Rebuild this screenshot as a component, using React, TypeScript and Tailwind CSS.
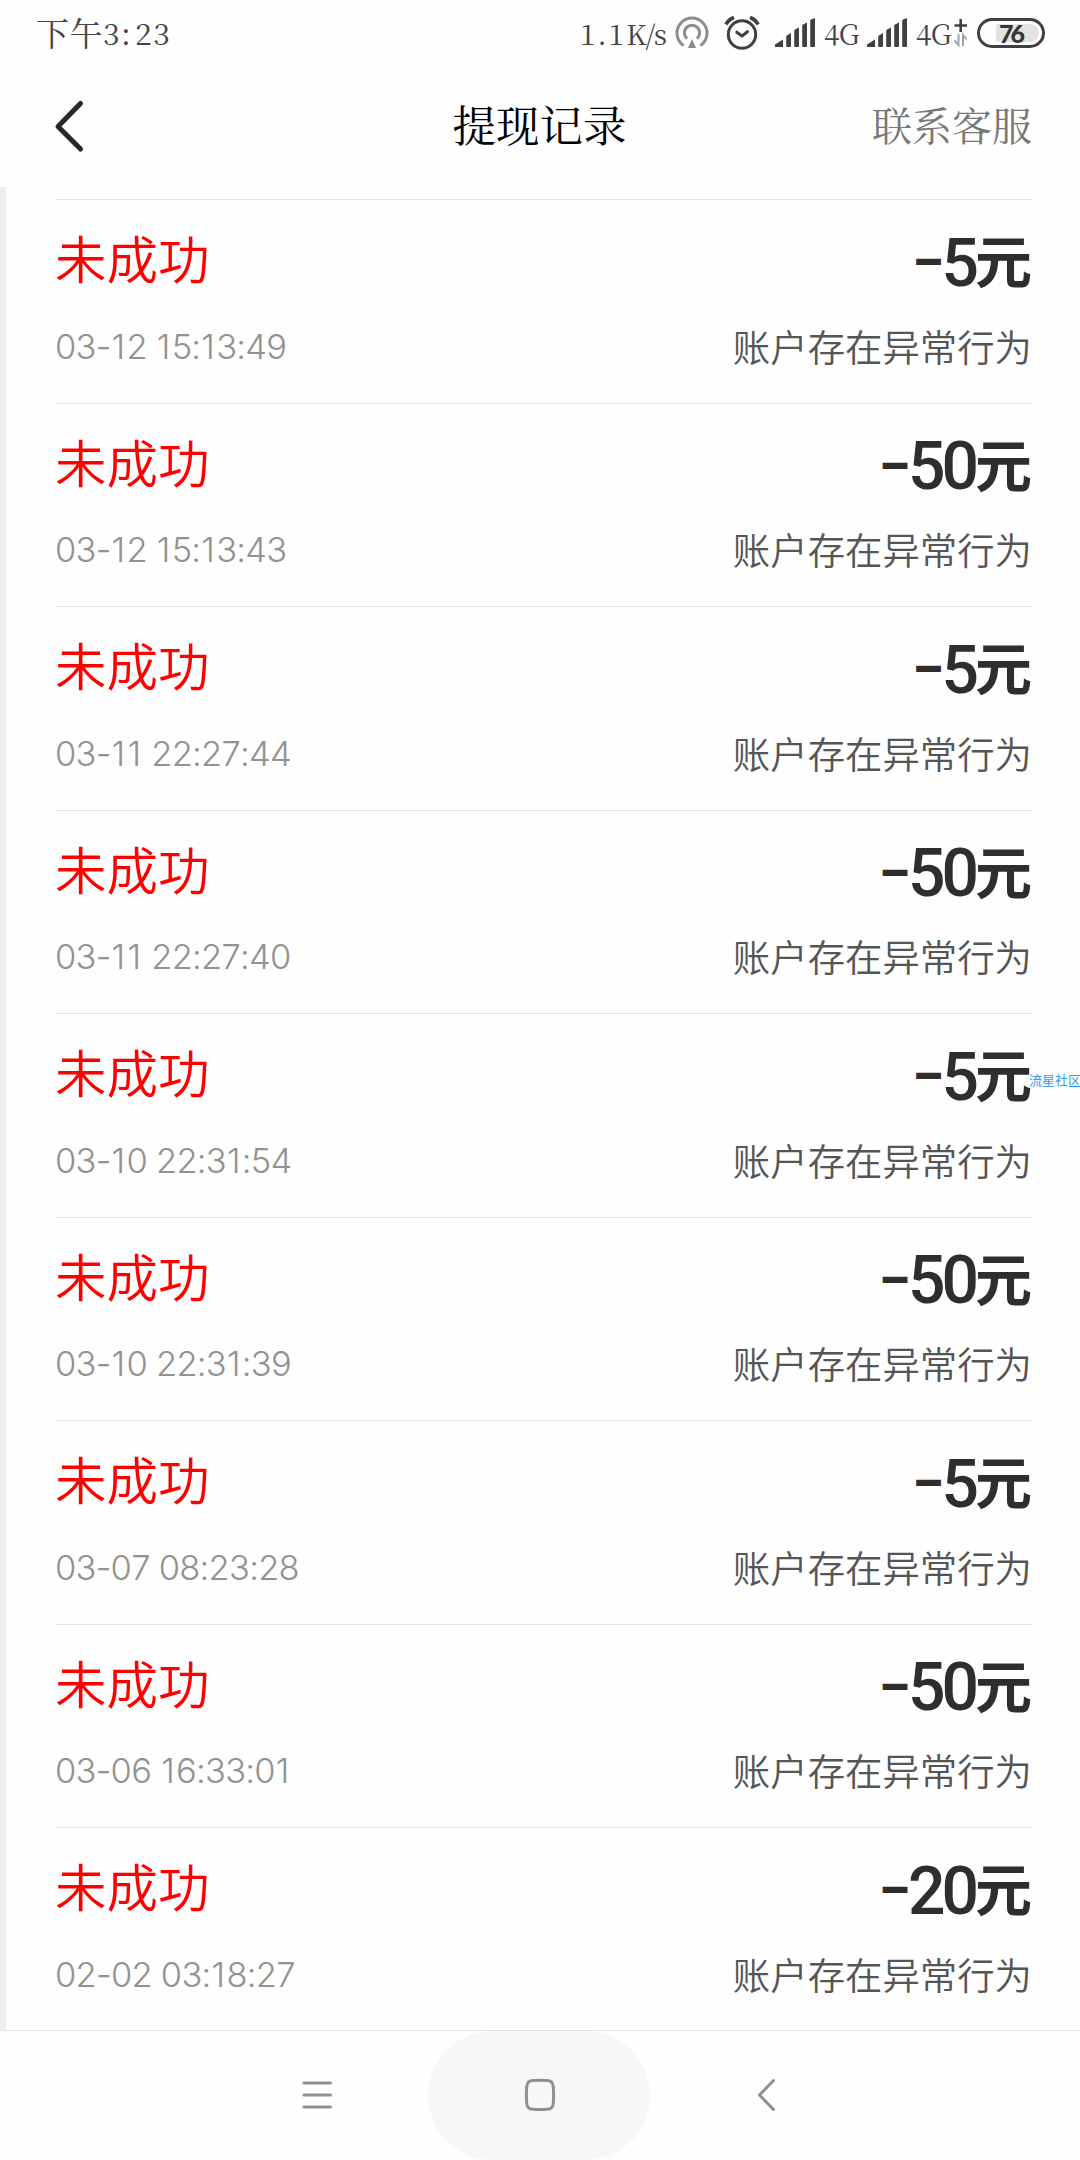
import React from 'react';

const records = [
  { amount: '5', time: '03-12 15:13:49' },
  { amount: '50', time: '03-12 15:13:43' },
  { amount: '5', time: '03-11 22:27:44' },
  { amount: '50', time: '03-11 22:27:40' },
  { amount: '5', time: '03-10 22:31:54', tag: '流星社区' },
  { amount: '50', time: '03-10 22:31:39' },
  { amount: '5', time: '03-07 08:23:28' },
  { amount: '50', time: '03-06 16:33:01' },
  { amount: '20', time: '02-02 03:18:27' },
];

const SignalIcon = () => (
  <svg width="42" height="30" viewBox="0 0 42 30" fill="#404040">
    <path d="M0 28.5V26.5L8 21.5V28.5Q8 29 7.500 29H.5Q0 29 0 28.500Z" />
    <path d="M11.200 18L16 15V28Q16 29 15 29H12.200Q11.200 29 11.200 28Z" />
    <path d="M19.200 13Q19.200 12 20 11.500L24 9.500V28Q24 29 23 29H20.200Q19.200 29 19.200 28Z" />
    <path d="M27.200 8Q27.200 7 28 6.500L32 4.500V28Q32 29 31 29H28.200Q27.200 29 27.200 28Z" />
    <path d="M35.200 3Q35.200 2 36 1.500L40 0V28Q40 29 39 29H36.200Q35.200 29 35.200 28Z" />
  </svg>
);

const HotspotIcon = () => (
  <svg width="34" height="34" viewBox="0 0 34 34" fill="none" stroke="#8c8c8c" strokeWidth="3">
    <path d="M8.700 29.600A15 15 0 1 1 25.300 29.600" />
    <path d="M12.200 22.700A7.600 7.600 0 1 1 21.800 22.700" />
    <path d="M17 23L21 32H13Z" fill="#8c8c8c" stroke="none" />
  </svg>
);

const AlarmIcon = () => (
  <svg width="36" height="36" viewBox="0 0 36 36" fill="none" stroke="#404040" strokeWidth="3">
    <circle cx="18" cy="19.500" r="13.700" />
    <path d="M12.800 17.200L18 21L23.500 16.700" strokeLinecap="round" strokeLinejoin="round" />
    <path d="M2 9.500Q4.500 4.500 10 2.500M34 9.500Q31.500 4.500 26 2.500" strokeWidth="3.800" />
  </svg>
);

const PlusDataIcon = () => (
  <svg width="14" height="30" viewBox="0 0 14 30" fill="none">
    <path d="M.5 7.500H13M6.700 1V14" stroke="#404040" strokeWidth="2.600" />
    <path d="M4.500 16V27L.5 22.500M9 28V17L12.500 21.500" stroke="#a3a3a3" strokeWidth="2" />
  </svg>
);

const Battery = () => (
  <div className="w-[68px] h-[30px] rounded-full border-[3px] border-[#404040] flex justify-end items-center pr-[3px]">
    <div className="w-[43px] h-[18px] bg-[#e3e3e3] rounded-l-[2px] rounded-r-[9px] pl-[3px] flex items-center">
      <span className="font-['Lato'] font-black text-[25px] leading-none tracking-[-3px] text-[#363636]">76</span>
    </div>
  </div>
);

const StatusBar = () => (
  <div className="h-[66px] flex items-center justify-between pl-[36px] pr-[35px] text-[#444] font-['Noto_Serif_CJK_SC','Noto_Sans_CJK_SC',serif] leading-none">
    <div className="flex items-center text-[33px] pb-[4px]">
      <span className="tracking-[0.500px]">下午</span>
      <span className="text-[30px] tracking-[1.500px] pt-[1px]">3:</span>
      <span className="text-[30px] tracking-[1.500px] pt-[1px] pl-[3px]">23</span>
    </div>
    <div className="flex items-center">
      <span className="text-[28px] tracking-[2px] pb-[1px]">1.1</span>
      <span className="text-[28px] tracking-[-1px] pb-[1px] mr-[9px]">K/s</span>
      <HotspotIcon />
      <div className="w-[15px]" />
      <AlarmIcon />
      <div className="w-[15px]" />
      <SignalIcon />
      <span className="w-[42px] pl-[7px] text-[28px] tracking-[-0.700px] pb-[1px] mr-[8px]">4G</span>
      <SignalIcon />
      <span className="w-[42px] pl-[7px] text-[28px] tracking-[-0.700px] pb-[1px] mr-[3px]">4G</span>
      <PlusDataIcon />
      <div className="w-[9px]" />
      <Battery />
    </div>
  </div>
);

const Header = () => (
  <header className="h-[121px] grid grid-cols-3 items-center pl-[54px] pr-[48px] pb-[1px] font-['Noto_Serif_CJK_SC','Noto_Sans_CJK_SC',serif] leading-none">
    <svg width="32" height="56" viewBox="0 0 32 56" fill="none" stroke="#25282b" strokeWidth="5" strokeLinecap="round" strokeLinejoin="round">
      <path d="M26.500 5.500L4 28.500L26.500 51" />
    </svg>
    <h1 className="text-center text-[43.500px] text-black whitespace-nowrap pb-[5px] pr-[7px]">提现记录</h1>
    <a href="#" className="text-right text-[40px] text-[#777] whitespace-nowrap pb-[5px]">
      联系客服
    </a>
  </header>
);

const RecordRow = ({ amount, time, tag }: { amount: string; time: string; tag?: string }) => (
  <li className="relative h-[203.500px] border-t border-[#e2e2e2] flex justify-between leading-none">
    <div className="flex flex-col">
      <span className="h-[120px] flex items-center pb-[6px] text-[51.500px] font-[350] text-[#ff0000]">未成功</span>
      <span className="h-[55px] flex items-center pb-[1px] font-['Inter'] font-[350] text-[34.500px] tracking-[-0.750px] text-[#929292] whitespace-pre">
        {/* the narrow 1 gets a little more room */}
        {time.split('').map((char, i) => (
          <span key={i} className={char === '1' ? 'pl-[1px] pr-[2px]' : ''}>
            {char}
          </span>
        ))}
      </span>
    </div>
    <div className="flex flex-col items-end">
      <div className="h-[120px] flex items-center text-[#2e2e2e]">
        <span className="font-['Roboto'] font-black text-[48px] tracking-[-1px] pt-[6px]">–</span>
        <span className="font-['Roboto'] font-medium text-[66px] tracking-[-4px] pt-[7px]">{amount}</span>
        <span className="text-[57px] font-bold pb-[3px]">元</span>
      </div>
      <span className="h-[55px] flex items-center pb-[2px] text-[37.400px] font-[350] text-[#555]">账户存在异常行为</span>
    </div>
    {tag && (
      <span className="absolute left-[974px] top-[59px] text-[13px] leading-none text-[#2f9bee] whitespace-nowrap">{tag}</span>
    )}
  </li>
);

const NavBar = () => (
  <nav className="h-[130px] border-t border-[#e2e2e2] flex items-center text-[#8f8f8f]">
    <div className="w-[428px] flex justify-end pr-[95px] pb-[2px]">
      <svg width="32" height="32" viewBox="0 0 32 32" stroke="currentColor" strokeWidth="3" strokeLinecap="round">
        <path d="M3 4H29.500M3 16H29.500M3 28H29.500" />
      </svg>
    </div>
    <div className="w-[222px] h-[129px] rounded-[65px] bg-[#f7f7f7] flex items-center justify-center pl-[2px] pb-[2px]">
      <svg width="34" height="34" viewBox="0 0 34 34" fill="none" stroke="currentColor" strokeWidth="3">
        <path d="M10 2.500Q17 1.900 24 2.500Q30 2.500 30.300 9Q31 17 30.300 25Q30 31.300 24 31.300Q17 31.900 10 31.300Q4 31.300 3.700 25Q3 17 3.700 9Q4 2.500 10 2.500Z" />
      </svg>
    </div>
    <svg className="ml-[105px] mb-[2px]" width="24" height="34" viewBox="0 0 24 34" fill="none" stroke="currentColor" strokeWidth="3" strokeLinecap="round" strokeLinejoin="round">
      <path d="M18.500 2.500L4.500 17L18.500 31.500" />
    </svg>
  </nav>
);

const App = () => {
  return (
    <div className="w-[1080px] h-[2160px] bg-[#fefefe] flex flex-col overflow-hidden font-['Noto_Sans_CJK_SC',sans-serif]">
      <StatusBar />
      <Header />
      <main className="flex-1 min-h-0 border-l-[6px] border-[#efefef] pt-[12px] pl-[49px] pr-[48px]">
        <ul>
          {records.map((record) => (
            <RecordRow key={record.time} {...record} />
          ))}
        </ul>
      </main>
      <NavBar />
    </div>
  );
};

export default App;
